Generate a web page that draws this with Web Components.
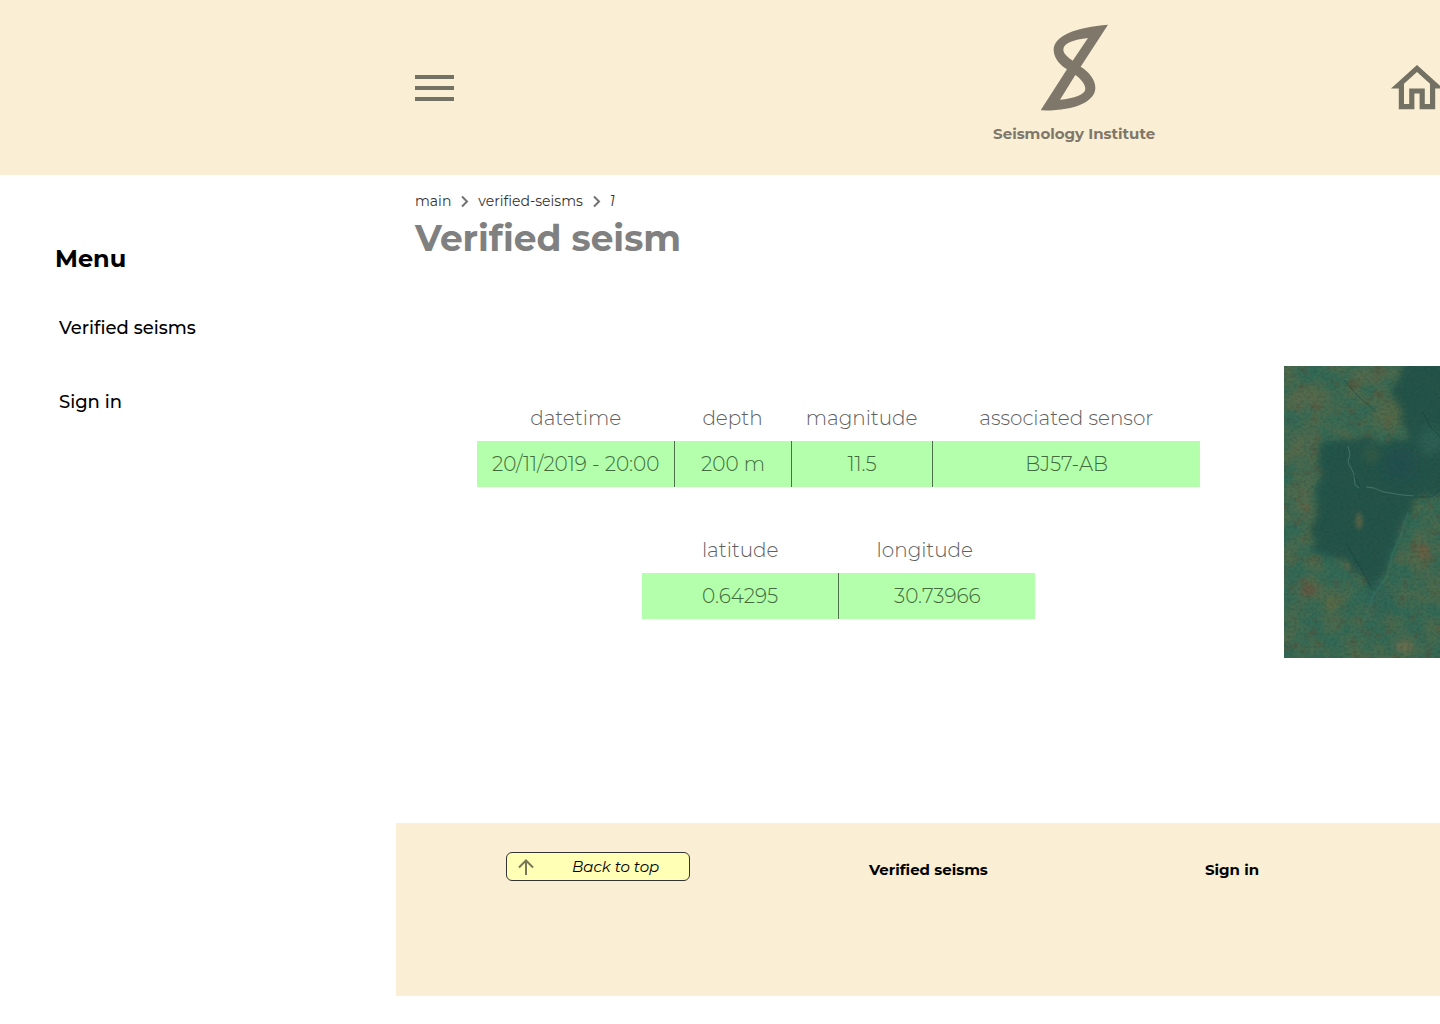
<!DOCTYPE html>
<html lang="en">
<head>
<meta charset="utf-8">
<title>Verified seism</title>
<style>
  :root {
    --sand: #faeed4;
    --ink: #7e776a;
    --icon: #727163;
    --rail: 396px;
  }
  body { margin: 0; background: #fff; font-family: Montserrat, Inter, "Liberation Sans", sans-serif; font-variant-ligatures: none; color: #000; }
</style>
</head>
<body>
<seism-page></seism-page>
<script>
  const define = (name, html) => customElements.define(name, class extends HTMLElement {
    constructor() {
      super();
      this.attachShadow({ mode: 'open' }).innerHTML = html;
    }
  });

  define('site-header', `
    <style>
      :host { display: block; background: var(--sand); }
      header { display: flex; align-items: center; box-sizing: border-box; height: 175px; padding-left: 415px; }
      button { border: 0; padding: 0; background: none; cursor: pointer; }
      svg { display: block; }
      .wide { flex: 16; }
      .narrow { flex: 7; }
      .brand { display: flex; flex-direction: column; align-items: center; gap: 12px; padding-bottom: 8px;
        color: var(--ink); font-size: 15px; line-height: 20px; font-weight: 700; text-decoration: none; white-space: nowrap; }
    </style>
    <header>
      <button type="button" aria-label="Toggle menu">
        <svg width="39" height="26" viewBox="0 0 39 26" fill="var(--icon)"><path d="M0 0h39v4H0zM0 11h39v4H0zM0 22h39v4H0z"/></svg>
      </button>
      <span class="wide"></span>
      <a class="brand" href="#">
        <svg width="69" height="88" viewBox="181 42 207 264" fill="var(--ink)" fill-rule="evenodd">
          <path d="M385 44C292 51 222 76 222 120C222 145 243 167 262 178L183 301C280 304 347 276 347 233C347 207 325 183 303 170ZM325 84L279 152C267 143 251 132 251 119C251 99 282 89 325 84ZM287 195C301 205 317 221 317 236C317 254 283 265 241 269Z"/>
        </svg>
        <span>Seismology Institute</span>
      </a>
      <span class="narrow"></span>
      <a href="#" aria-label="Home">
        <svg width="49" height="45" viewBox="2 3 18.85 17.3" fill="var(--icon)"><path d="M12 5.69l5 4.5V18h-2v-6H9v6H7v-7.81l5-4.5M12 3L2 12h3v8h6v-6h2v6h6v-8h3L12 3z"/></svg>
      </a>
    </header>`);

  define('side-menu', `
    <style>
      :host { display: block; flex: 0 0 var(--rail); }
      nav { padding: 68px 55px 0; }
      h2 { margin: 0; font-size: 24px; line-height: 32px; font-weight: 700; }
      .links { padding: 41px 4px 0; display: flex; flex-direction: column; gap: 50px; }
      ::slotted(a) { display: block; font-size: 18px; line-height: 24px; font-weight: 500; color: #000; text-decoration: none; }
    </style>
    <nav aria-label="Menu">
      <h2>Menu</h2>
      <div class="links"><slot></slot></div>
    </nav>`);

  define('crumb-trail', `
    <style>
      :host { display: block; }
      nav { display: flex; align-items: center; gap: 9px; font-size: 14px; line-height: 22px; font-weight: 400; color: #333; }
      a { color: inherit; text-decoration: none; }
    </style>
    <nav aria-label="Breadcrumb">
      <a href="#">main</a>
      <svg width="9" height="13" viewBox="0 0 9 13" fill="none" stroke="#727272" stroke-width="2"><path d="M2 1.500l5 5-5 5"/></svg>
      <a href="#">verified-seisms</a>
      <svg width="9" height="13" viewBox="0 0 9 13" fill="none" stroke="#727272" stroke-width="2"><path d="M2 1.500l5 5-5 5"/></svg>
      <em>1</em>
    </nav>`);

  customElements.define('reading-table', class extends HTMLElement {
    connectedCallback() {
      const cells = this.getAttribute('cells').split(';').map(c => c.split('|'));
      this.attachShadow({ mode: 'open' }).innerHTML = `
        <style>
          :host { display: block; }
          table { width: 100%; table-layout: fixed; border-collapse: separate; border-spacing: 0; font-size: 20px; font-weight: 300; }
          th, td { box-sizing: border-box; height: 46px; padding: 0; text-align: center; font-weight: 300; line-height: 24px; white-space: nowrap; }
          th { color: #606060; }
          th.lead { padding-right: 24px; }
          td { background: #b3ffab; color: #416a3d; }
          td + td { border-left: 1px solid #4d6f4a; }
        </style>
        <table>
          <colgroup>${cells.map(c => `<col style="width:${c[2]}%">`).join('')}</colgroup>
          <thead><tr>${cells.map(c => `<th scope="col" class="${c[3] || ''}">${c[0]}</th>`).join('')}</tr></thead>
          <tbody><tr>${cells.map(c => `<td>${c[1]}</td>`).join('')}</tr></tbody>
        </table>`;
    }
  });

  define('terrain-map', `
    <style>
      :host { display: block; flex: 0 0 156px; height: 292px; overflow: hidden; }
      svg { display: block; width: 100%; height: 100%; }
    </style>
    <svg viewBox="0 0 156 292" preserveAspectRatio="xMinYMin slice" role="img" aria-label="Satellite view">
      <defs>
        <filter id="edge" x="-20%" y="-20%" width="140%" height="140%">
          <feTurbulence type="fractalNoise" baseFrequency=".06" numOctaves="3" seed="4"/>
          <feDisplacementMap in="SourceGraphic" scale="12" xChannelSelector="R" yChannelSelector="G"/>
          <feGaussianBlur stdDeviation="3"/>
        </filter>
        <filter id="soft" x="-50%" y="-50%" width="200%" height="200%"><feGaussianBlur stdDeviation="5"/></filter>
        <filter id="spot" x="-100%" y="-100%" width="300%" height="300%"><feGaussianBlur stdDeviation="2"/></filter>
        <filter id="brown" x="0" y="0" width="100%" height="100%" color-interpolation-filters="sRGB">
          <feTurbulence type="fractalNoise" baseFrequency=".05" numOctaves="5" seed="11"/>
          <feColorMatrix values="0 0 0 0 .36  0 0 0 0 .42  0 0 0 0 .28  2.500 0 0 0 -.8"/>
        </filter>
        <filter id="rust" x="0" y="0" width="100%" height="100%" color-interpolation-filters="sRGB">
          <feTurbulence type="fractalNoise" baseFrequency=".08" numOctaves="5" seed="23"/>
          <feColorMatrix values="0 0 0 0 .36  0 0 0 0 .31  0 0 0 0 .22  0 4 0 0 -2.3"/>
        </filter>
        <filter id="grain" x="0" y="0" width="100%" height="100%" color-interpolation-filters="sRGB">
          <feTurbulence type="fractalNoise" baseFrequency=".3 .4" numOctaves="3" seed="7"/>
          <feColorMatrix values="0 0 0 0 .10  0 0 0 0 .24  0 0 0 0 .22  0 0 2 0 -.8"/>
        </filter>
      </defs>
      <rect width="156" height="292" fill="#346a56"/>
      <rect width="156" height="292" filter="url(#brown)" opacity=".6"/>
      <g fill="#6b6a48" opacity=".38" filter="url(#soft)">
        <ellipse cx="20" cy="80" rx="16" ry="20"/><ellipse cx="22" cy="135" rx="12" ry="22"/>
        <ellipse cx="25" cy="35" rx="24" ry="14"/>
        <ellipse cx="105" cy="48" rx="14" ry="22"/><ellipse cx="140" cy="190" rx="10" ry="22"/>
        <ellipse cx="24" cy="226" rx="16" ry="12"/><ellipse cx="120" cy="278" rx="14" ry="10"/>
        <ellipse cx="88" cy="10" rx="20" ry="8"/>
      </g>
      <rect width="156" height="292" filter="url(#rust)" opacity=".5"/>
      <path d="M126 -12L180-14V126L146 130L133 131L123 146L109 184L103 204L89 228L76 205L53 191L29 184L31 157L34 117L36 78L73 72L108 76L126 72L116 50L106 27Z" fill="#205249" opacity=".92" filter="url(#edge)"/>
      <g filter="url(#soft)">
        <ellipse cx="116" cy="98" rx="16" ry="15" fill="#1e4a52" opacity=".55"/>
        <ellipse cx="147" cy="75" rx="12" ry="14" fill="#33685a" opacity=".6"/>
        <ellipse cx="87" cy="88" rx="6" ry="8" fill="#456340" opacity=".6"/>
        <ellipse cx="96" cy="235" rx="14" ry="18" fill="#246259" opacity=".6"/>
        <ellipse cx="108" cy="48" rx="9" ry="16" fill="#56683f" opacity=".5"/>
      </g>
      <g filter="url(#spot)">
        <ellipse cx="75" cy="155" rx="3" ry="8" fill="#6b6a45" opacity=".85"/>
        <ellipse cx="140" cy="186" rx="6" ry="8" fill="#75583a" opacity=".6"/>
        <ellipse cx="24" cy="224" rx="7" ry="6" fill="#6b4d38" opacity=".6"/>
        <ellipse cx="63" cy="200" rx="3" ry="3" fill="#7a6244" opacity=".6"/>
        <ellipse cx="22" cy="141" rx="4" ry="4" fill="#7a6244" opacity=".5"/>
        <ellipse cx="120" cy="281" rx="9" ry="6" fill="#77704f" opacity=".6"/>
        <ellipse cx="48" cy="238" rx="7" ry="7" fill="#5f693f" opacity=".6"/>
      </g>
      <rect width="156" height="292" filter="url(#grain)" opacity=".3"/>
      <g fill="none" stroke-width="1">
        <path d="M64 80l2 8-2 8 6 12 1 11 4 3M82 121l8 1 10 4 18 3 12 1" stroke="#5a8d7c" opacity=".55"/>
        <path d="M76 121l-6-12M128 131l20 0 8-8" stroke="#123c3c" opacity=".5"/>
        <path d="M60 14l14 16 18 16M138 45l10 18 8 8M62 177l14 24 12 21" stroke="#143b39" opacity=".5"/>
        <path d="M124 146l-7 22-8 18-6 24-14 20-10 26" stroke="#3f8572" stroke-width="2" opacity=".25"/>
      </g>
    </svg>`);

  define('page-footer', `
    <style>
      :host { display: block; background: var(--sand); margin-bottom: 28px; }
      footer { box-sizing: border-box; min-height: 173px; padding: 29px 0 0 110px; display: grid;
        grid-template-columns: 363fr 336fr 235fr; align-items: start; }
      a { font-size: 15px; line-height: 20px; font-weight: 700; color: #000; text-decoration: none; padding-top: 8px; }
      button { box-sizing: border-box; width: 184px; height: 29px; display: flex; align-items: center; gap: 38px; padding: 0 0 0 11px;
        border: 1px solid #333; border-radius: 6px; background: #ffffb5; font: italic 400 15px/20px Montserrat, Inter, "Liberation Sans", sans-serif;
        color: #000; cursor: pointer; white-space: nowrap; }
    </style>
    <footer>
      <button type="button">
        <svg width="16" height="16" viewBox="0 0 16 16" fill="none" stroke="#77765a" stroke-width="2"><path d="M8 16V1.500M1 8.500l7-7 7 7"/></svg>
        <span>Back to top</span>
      </button>
      <a href="#">Verified seisms</a>
      <a href="#">Sign in</a>
    </footer>`);

  define('seism-page', `
    <style>
      :host { display: flex; flex-direction: column; min-height: 100vh; overflow-x: clip; }
      .body { flex: 1; display: flex; }
      main { flex: 1; min-width: 0; display: flex; flex-direction: column; }
      .head { padding: 15px 19px 0; }
      h1 { margin: 0; font-size: 36px; line-height: 52px; font-weight: 700; color: #808080; }
      .detail { display: flex; align-items: flex-start; padding-top: 102px; }
      .tables { flex: 1; min-width: 0; padding: 29px 84px 0 81px; display: flex; flex-direction: column; align-items: center; gap: 40px; }
      .full { width: 100%; }
      .half { width: 54.4%; }
      page-footer { margin-top: auto; }
    </style>
    <site-header></site-header>
    <div class="body">
      <side-menu><a href="#">Verified seisms</a><a href="#">Sign in</a></side-menu>
      <main>
        <div class="head">
          <crumb-trail></crumb-trail>
          <h1>Verified seism</h1>
        </div>
        <section class="detail">
          <div class="tables">
            <reading-table class="full" cells="datetime|20/11/2019 - 20:00|27.3;depth|200 m|16.1;magnitude|11.5|19.6;associated sensor|BJ57-AB|37"></reading-table>
            <reading-table class="half" cells="latitude|0.64295|50;longitude|30.73966|50|lead"></reading-table>
          </div>
          <terrain-map></terrain-map>
        </section>
        <page-footer></page-footer>
      </main>
    </div>`);
</script>
</body>
</html>
